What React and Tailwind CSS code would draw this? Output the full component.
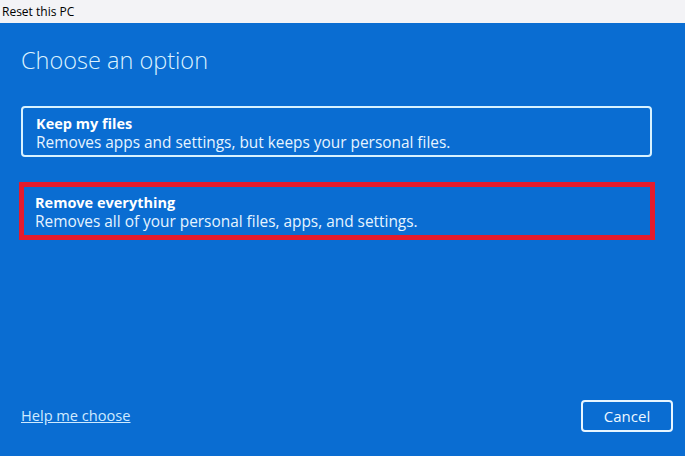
export default function App() {
  const font = { fontFamily: '"Open Sans", "Noto Sans", sans-serif' }
  return (
    <div className="w-[685px] h-[456px] flex flex-col overflow-hidden" style={font}>
      <div className="h-[23px] bg-[#f3f3f6] flex items-center px-[2px] text-[12px] text-black">
        Reset this PC
      </div>
      <div className="flex-1 bg-[#0a6dd2] flex flex-col px-[21px] pt-[21px] pb-[24px]">
        <h1 className="text-[23.5px] font-light text-[#dcf2ff] leading-[32px]">Choose an option</h1>

        <button
          type="button"
          className="mt-[30px] w-[631px] h-[51px] rounded-[4px] border-2 border-[#d8f2ff] text-left px-[13px] pt-[3px] flex flex-col justify-center"
        >
          <span className="text-[14.5px] font-bold text-white leading-[19px]">Keep my files</span>
          <span className="text-[15.4px] text-[#e6f4ff] leading-[20px]">
            Removes apps and settings, but keeps your personal files.
          </span>
        </button>

        <button
          type="button"
          className="mt-[25px] -ml-[2px] w-[636px] h-[58px] border-[5px] border-[#e31b2d] text-left px-[11px] pt-[2px] flex flex-col justify-center"
        >
          <span className="text-[14.5px] font-bold text-white leading-[19px]">Remove everything</span>
          <span className="text-[15.4px] text-[#e6f4ff] leading-[20px]">
            Removes all of your personal files, apps, and settings.
          </span>
        </button>

        <div className="mt-auto flex items-center justify-between">
          <a href="#" className="text-[14.6px] text-[#cfeaff] underline">Help me choose</a>
          <button
            type="button"
            className="w-[92px] h-[32px] rounded-[4px] border-2 border-[#e8f6ff] text-[15px] text-[#eef8ff] mr-[-9px]"
          >
            Cancel
          </button>
        </div>
      </div>
    </div>
  )
}
